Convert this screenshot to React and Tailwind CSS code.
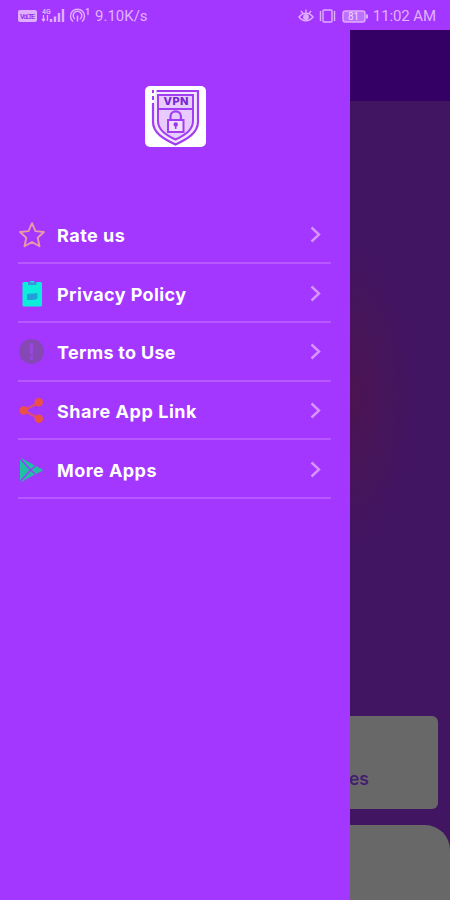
const StarIcon = () => (
    <svg viewBox="0 0 26 26" className="size-[26px]" fill="none" stroke="#e79ba6" strokeWidth="1.9" strokeLinejoin="round">
        <path d="M13 1.2l3.5 7.9 8.4.9-6.2 5.7 1.8 8.6-7.5-4.3-7.5 4.3 1.8-8.6L1.1 10l8.4-.9z" />
    </svg>
);

const ClipboardIcon = () => (
    <svg viewBox="0 0 26 26" className="size-[26px]">
        <rect x="3.5" y="1" width="19.5" height="24.5" rx="1.5" fill="#0eecdc" />
        <path d="M9 1h2a2.2 2.2 0 0 1 4.4 0h2v3H9z" fill="#3f8fe0" />
        <path d="M11.500 0h3.500v1.500h-3.500z" fill="#0eecdc" />
        <path d="M8 13l10.500-1v5.500L15.500 19H8z" fill="#1aa5dd" />
        <path d="M9 15h8M9 17h5" stroke="#3b8bd6" strokeWidth="0.8" />
    </svg>
);

const AlertIcon = () => (
    <svg viewBox="0 0 26 26" className="size-[26px]">
        <circle cx="12.5" cy="12.5" r="12.5" fill="#8548b5" />
        <path d="M10.500 4.500h4l-.7 11h-2.600z" fill="#9b46dc" />
        <circle cx="12.5" cy="19" r="1.9" fill="#9b46dc" />
    </svg>
);

const ShareIcon = () => (
    <svg viewBox="0 0 26 26" className="size-[26px]" fill="#ed5145">
        <path d="M19.500 4.500L5 12.500l14.500 8" fill="none" stroke="#e04d6c" strokeWidth="2.2" />
        <circle cx="19.8" cy="4.2" r="4.2" />
        <circle cx="4.8" cy="12.5" r="4.3" />
        <circle cx="19.8" cy="20.8" r="4.2" />
    </svg>
);

const PlayIcon = () => (
    <svg viewBox="0 0 26 26" className="size-[26px]" fill="#1fbfa5">
        <path d="M1 2.500v21.200L10.500 13z" />
        <path d="M1.500.6l14.300 7.800-4 3.700z" />
        <path d="M1.500 25.400l14.300-7.800-4-3.700z" />
        <path d="M17 9.200l6 3a1 1 0 0 1 0 1.700l-6 3.100-4.200-4z" />
    </svg>
);

const ShieldLogo = () => (
    <svg viewBox="0 0 61 61" className="size-[61px]" fill="none" stroke="#a13df2">
        <rect width="61" height="61" rx="5" fill="#fff" stroke="none" />
        <path d="M11.500 5H53v31c0 11-11 17-22.500 22.500C19 53 8 47 8 36V17" fill="#f5e6ff" strokeWidth="2.2" />
        <path d="M8 4v3M8 10v4" strokeWidth="2" />
        <path d="M13 9h35v26c0 9-8 14-17.500 18.500C21 49 13 44 13 35z" fill="#e9ccff" strokeWidth="2" />
        <path d="M13 23h35" strokeWidth="1.8" />
        <path d="M25.500 34v-3.500a5.200 5.200 0 0 1 10.400 0V34" strokeWidth="2.2" />
        <rect x="23" y="34" width="15.5" height="12" fill="#f3e0ff" strokeWidth="2" />
        <circle cx="30.700" cy="38.500" r="2.200" fill="#9a35ec" stroke="none" />
        <path d="M30.700 39v4" strokeWidth="1.6" />
        <text
            x="18.5"
            y="19"
            textLength="25"
            fill="#7826d0"
            stroke="none"
            className="font-['Inter',sans-serif] text-[11px] font-extrabold"
        >
            VPN
        </text>
    </svg>
);

const Chevron = () => (
    <svg viewBox="0 0 12 18" className="h-[18px] w-3" fill="none" stroke="#d794ff" strokeWidth="2.4">
        <path d="M1.5 1.5L9 8.500l-7.500 7" />
    </svg>
);

const SignalIcons = () => (
    <svg viewBox="0 0 72 18" className="h-[18px] w-[72px]" fill="none" stroke="#dfaeff" strokeWidth="1.3">
        <rect x="0" y="3" width="19" height="12" rx="2" fill="#dfaeff" stroke="none" />
        <text x="2" y="12" textLength="15" fill="#9c38ed" stroke="none" className="font-['Roboto',sans-serif] text-[7px] font-bold">
            VoLTE
        </text>
        <text x="24" y="6.500" fill="#dfaeff" stroke="none" className="font-['Roboto',sans-serif] text-[7px] font-bold">
            4G
        </text>
        <path d="M25.500 8v6m-1.500-2l1.500 2 1.500-2M29.500 14V8" />
        <path d="M33 15v-3M37 15V9.500M41 15V6M45 15V2" strokeWidth="2.4" />
        <path d="M55 14.500a7 7 0 1 1 9 0M57 12a4.300 4.300 0 1 1 5 0M59.500 8.500v6" strokeWidth="1.5" />
        <text x="67" y="8" fill="#dfaeff" stroke="none" className="font-['Roboto',sans-serif] text-[9px] font-bold">
            1
        </text>
    </svg>
);

const DeviceIcons = () => (
    <svg viewBox="0 0 72 18" className="h-[18px] w-[72px]" fill="none" stroke="#dfaeff" strokeWidth="1.4">
        <path d="M1 10c4-5 10-5 14 0-4 5-10 5-14 0zM3 4l2 2.500M8 2.500v3M13 4l-2 2.500" />
        <circle cx="8" cy="10" r="2.2" fill="#dfaeff" />
        <rect x="25" y="3" width="9" height="12" rx="1" />
        <path d="M22.500 4v10M36.500 4v10" />
        <rect x="45" y="4" width="22" height="11" rx="2.5" fill="#bf70ff" />
        <path d="M69 7.500v4" strokeWidth="2" />
        <text x="50" y="13" fill="#f0d8ff" stroke="none" className="font-['Roboto',sans-serif] text-[10px]">
            81
        </text>
    </svg>
);

const menuItems = [
    { label: "Rate us", icon: StarIcon, spacing: "tracking-[0.5px]" },
    { label: "Privacy Policy", icon: ClipboardIcon, spacing: "tracking-[0.4px]" },
    { label: "Terms to Use", icon: AlertIcon, spacing: "tracking-[0.3px]" },
    { label: "Share App Link", icon: ShareIcon, spacing: "tracking-[0.55px]" },
    { label: "More Apps", icon: PlayIcon, spacing: "tracking-[0.45px]" },
];

const StatusBar = () => (
    <header className="flex h-[30px] shrink-0 items-center justify-between pl-[18px] pr-[14px] pt-[2px] font-['Roboto',sans-serif] text-[15px] text-[#e0b2ff]">
        <div className="flex items-center gap-[5px]">
            <SignalIcons />
            <span>9.10K/s</span>
        </div>
        <div className="flex items-center gap-[3px]">
            <DeviceIcons />
            <span className="tracking-[-0.1px]">11:02 AM</span>
        </div>
    </header>
);

const Drawer = () => (
    <aside className="w-[350px] shrink-0 bg-[#a336ff]">
        <div className="flex h-[175.5px] justify-center pt-14">
            <ShieldLogo />
        </div>
        <ul className="pl-[18px] pr-[19px]">
            {menuItems.map(({ label, icon: Icon, spacing }) => (
                <li key={label} className="flex h-[58.7px] items-center border-b-2 border-[#b657ff] pl-px pt-[2px]">
                    <Icon />
                    <span className={`ml-3 flex-1 whitespace-nowrap pt-[2px] text-[18px] leading-6 font-bold text-white ${spacing}`}>
                        {label}
                    </span>
                    <span className="mr-[9px]">
                        <Chevron />
                    </span>
                </li>
            ))}
        </ul>
    </aside>
);

// Home screen showing dimmed behind the open drawer
const DimmedHome = () => (
    <main className="flex flex-1 flex-col overflow-hidden bg-[#421563]">
        <div className="h-[71px] shrink-0 bg-[#350066]" />
        <div className="flex-1 bg-[radial-gradient(ellipse_65px_155px_at_0px_295px,#4c1451_0%,#471559_45%,#421563_100%)]" />
        <div className="mr-3 flex h-[93px] items-end rounded-r-[6px] bg-[#686868] pb-[18px]">
            <span className="-ml-px text-[17.5px] font-semibold leading-6 text-[#42206f]">es</span>
        </div>
        <div className="mt-4 h-[75px] shrink-0 rounded-tr-[25px] bg-[#686868]" />
    </main>
);

export default function App() {
    return (
        <div className="flex h-[900px] w-[450px] flex-col overflow-hidden bg-[#a336ff] font-['Inter','Open_Sans',sans-serif]">
            <StatusBar />
            <div className="flex flex-1">
                <Drawer />
                <DimmedHome />
            </div>
        </div>
    );
}
